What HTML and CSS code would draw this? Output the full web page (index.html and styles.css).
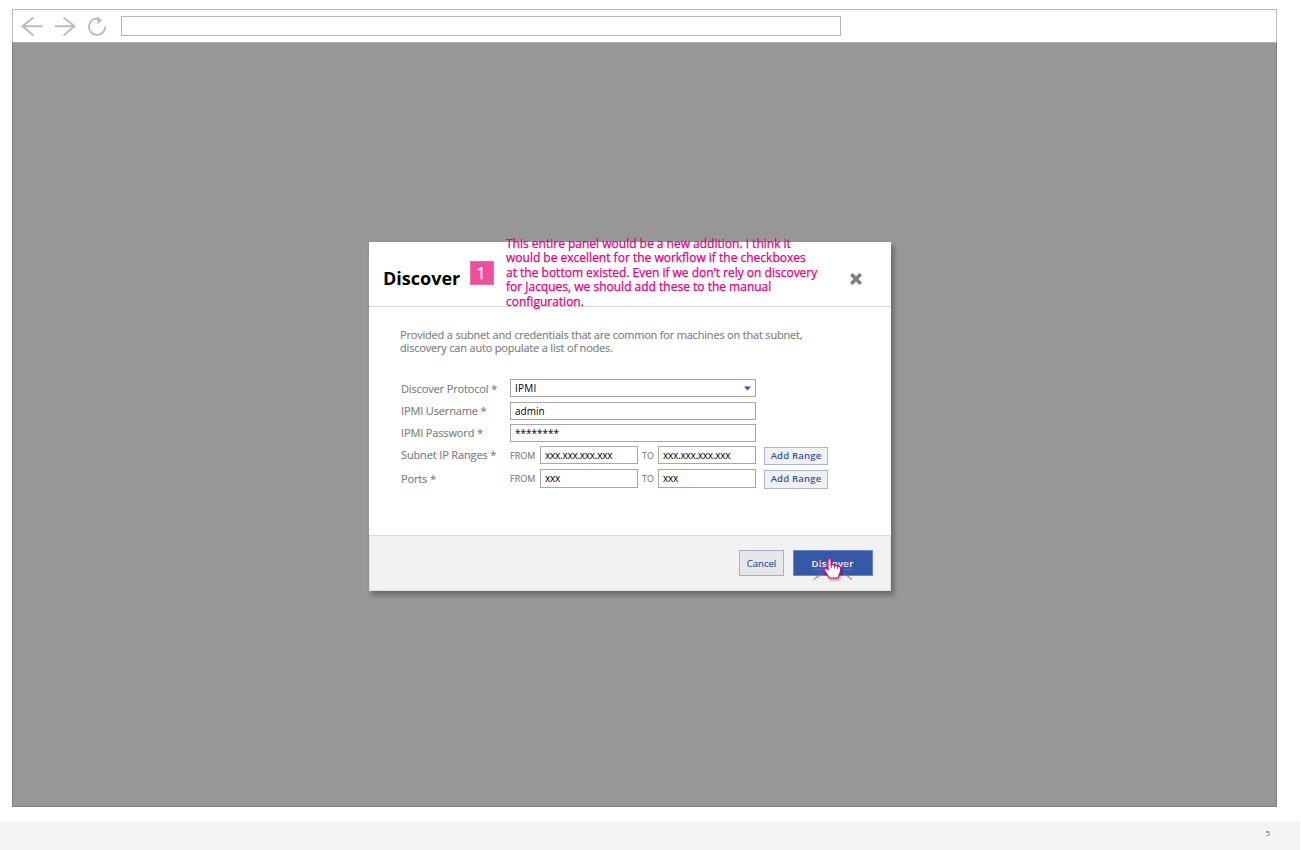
FILE: index.html
```html
<!DOCTYPE html>
<html lang="en">
<head>
<meta charset="utf-8">
<title>Discover</title>
<link rel="stylesheet" href="styles.css">
</head>
<body>
<main class="browser">
  <header class="toolbar">
    <svg class="nav" width="88" height="24" viewBox="0 0 88 24" fill="none" stroke="#bcbcbc" stroke-width="1.9">
      <path d="M21.500 12.300H1.500M12.500 3.500L1.500 12.300L12.500 21.500"/>
      <path d="M34 12.300H53.500M42.500 3.500L53.500 12.300L42.500 21.500"/>
      <path d="M77.500 4.700A8.200 8.200 0 1 0 84.300 12.500" stroke-width="2"/>
      <path d="M76.300 2.500L81 6.300L76.300 10.500Z" fill="#bcbcbc" stroke="none"/>
    </svg>
    <div class="address"></div>
  </header>
  <div class="viewport">
    <section class="modal">
      <header class="modal-head">
        <h1 class="title">Discover</h1>
        <span class="marker">1</span>
        <p class="note">This entire panel would be a new addition. I think it<br>would be excellent for the workflow if the checkboxes<br>at the bottom existed. Even if we don’t rely on discovery<br>for Jacques, we should add these to the manual<br>configuration.</p>
        <svg class="close" width="12" height="12" viewBox="0 0 12 12" stroke="#808080" stroke-width="3.700" stroke-linecap="butt"><path d="M1.300 1.300L10.700 10.700M10.700 1.300L1.300 10.700"/></svg>
      </header>
      <div class="modal-body">
        <p class="intro">Provided a subnet and credentials that are common for machines on that subnet,<br>discovery can auto populate a list of nodes.</p>
        <div class="form">
          <div class="row"><span class="label">Discover Protocol *</span><div class="field wide select">IPMI<svg width="7" height="5" viewBox="0 0 7 5"><path d="M0 .5H7L3.500 4.500Z" fill="#3459a9"/></svg></div></div>
          <div class="row"><span class="label tight">IPMI Username *</span><div class="field wide">admin</div></div>
          <div class="row"><span class="label tight">IPMI Password *</span><div class="field wide">********</div></div>
          <div class="row"><span class="label tight">Subnet IP Ranges *</span><span class="from">FROM</span><div class="field ip">xxx.xxx.xxx.xxx</div><span class="to">TO</span><div class="field ip">xxx.xxx.xxx.xxx</div><div class="add">Add Range</div></div>
          <div class="row ports"><span class="label">Ports *</span><span class="from">FROM</span><div class="field ip">xxx</div><span class="to">TO</span><div class="field ip">xxx</div><div class="add">Add Range</div></div>
        </div>
      </div>
      <footer class="modal-foot">
        <div class="cancel">Cancel</div>
        <div class="submit">Discover
          <svg class="pointer" width="42" height="28" viewBox="0 0 42 28">
            <g stroke="#d8308b" stroke-width="1" fill="none"><path d="M3 5L12 11M2 14.500H12M3 24.500L12 17.500M41 5L32 11M42 14.500H32M41 24.500L32 17.500"/></g>
            <path class="hand" d="M17 4.500Q18.500 2.500 20 4.500V10Q22 8.800 23.500 10.500Q25.500 9.500 26.500 11.500Q29 10.500 29.500 13V16.500L27 23H18.500L13.500 15.500Q12.500 13 14.500 12.800L17 14.500Z" fill="#fff" stroke="#e5007d" stroke-width="1.200"/>
            <path d="M20.500 10V13M23.500 10.500V13.500M26.500 11.500V14" stroke="#e5007d" stroke-width=".8"/>
          </svg>
        </div>
      </footer>
    </section>
  </div>
</main>
<footer class="page-foot">5</footer>
</body>
</html>
```
FILE: styles.css
```css
* { box-sizing: border-box; }
body {
  margin: 0;
  height: 850px;
  display: flex;
  flex-direction: column;
  overflow: hidden;
  background: #fff;
  font-family: "Open Sans", sans-serif;
}
h1, p { margin: 0; }
.browser {
  width: 1265px;
  height: 798px;
  margin: 9px 0 14px 12px;
  display: flex;
  flex-direction: column;
  flex-shrink: 0;
}
.toolbar {
  height: 33px;
  display: flex;
  align-items: flex-start;
  padding: 6px 0 0 8px;
  border: 1px solid #bcbcbc;
  border-bottom: 0;
}
.nav { flex: none; margin-top: -2px; }
.address {
  width: 720px;
  height: 20px;
  margin-left: 12px;
  border: 1px solid #b5b5b5;
}
.viewport {
  flex: 1;
  background: #979797;
  border: 1px solid #808080;
  border-top-color: #b0b0b0;
  padding: 199px 0 0 356px;
}
.modal {
  width: 522px;
  height: 349px;
  display: flex;
  flex-direction: column;
  background: #fff;
  box-shadow: 3px 4px 5px rgba(0, 0, 0, .3);
}
.modal-head {
  height: 65px;
  display: flex;
  align-items: flex-start;
  padding-left: 14px;
  border-bottom: 1px solid #d8d8d8;
}
.title {
  width: 87px;
  padding-top: 24px;
  font-size: 18px;
  line-height: 25px;
  font-weight: 700;
  color: #000;
}
.marker {
  width: 24px;
  height: 24px;
  margin-top: 19px;
  border: 1px solid #f06aae;
  background: #ee4f9c;
  color: #fff;
  font-size: 16px;
  line-height: 22px;
  text-align: center;
  padding-right: 2px;
  -webkit-text-stroke: .25px #fff;
}
.note {
  width: 320px;
  margin: -5px 0 0 12px;
  color: #e5007d;
  font-size: 12px;
  line-height: 14.45px;
  white-space: nowrap;
  -webkit-text-stroke: .25px #e5007d;
}
.close { margin: 31px 0 0 24px; }
.modal-body { height: 228px; padding: 21px 0 0 31px; }
.intro {
  color: #808080;
  font-size: 11px;
  line-height: 13px;
  letter-spacing: -.19px;
  white-space: nowrap;
  -webkit-text-stroke: .15px #808080;
}
.form {
  padding: 25px 0 0 1px;
  display: grid;
  grid-template-rows: 23px 22px 22px 23px 20px;
}
.row { display: flex; align-items: flex-start; }
.label {
  width: 109px;
  font-size: 11px;
  line-height: 20px;
  letter-spacing: -.14px;
  color: #808080;
  -webkit-text-stroke: .15px #808080;
}
.tight { line-height: 18px; }
.field {
  height: 18px;
  padding-left: 4px;
  border: 1px solid #a8a8a8;
  font-size: 10px;
  line-height: 16px;
  color: #000;
  white-space: nowrap;
}
.wide { width: 246px; }
.ip { width: 98px; letter-spacing: -.23px; }
.ports .field, .ports .add { height: 19px; }
.select {
  display: flex;
  align-items: center;
  justify-content: space-between;
  padding-right: 4px;
  letter-spacing: .25px;
}
.from, .to {
  width: 30px;
  font-size: 9px;
  line-height: 20px;
  color: #808080;
  -webkit-text-stroke: .15px #808080;
}
.to { width: 20px; padding-left: 4px; }
.add {
  width: 64px;
  height: 18px;
  margin: 1px 0 0 8px;
  border: 1px solid #aab3dc;
  background: #f1f1f1;
  color: #3459a9;
  font-size: 9.5px;
  letter-spacing: .2px;
  font-weight: 600;
  line-height: 16px;
  text-align: center;
  white-space: nowrap;
}
.modal-foot {
  height: 56px;
  display: flex;
  align-items: flex-start;
  justify-content: flex-end;
  gap: 9px;
  padding: 14px 17px 0 0;
  background: #f1f1f1;
  border: 1px solid #dcdcdc;
}
.cancel, .submit {
  height: 26px;
  border: 1px solid #a5aedb;
  font-size: 9.5px;
  line-height: 25px;
  text-align: center;
}
.cancel {
  width: 45px;
  background: #e7e7e7;
  color: #3459a9;
  -webkit-text-stroke: .2px #3459a9;
}
.submit {
  position: relative;
  width: 80px;
  background: #3459a9;
  border-color: #7185c2;
  color: #fff;
  font-weight: 600;
  letter-spacing: .35px;
  padding-right: 1px;
}
.pointer { position: absolute; left: 17px; top: 4px; }
.hand { filter: drop-shadow(1px 2px 1px rgba(0, 0, 0, .3)); }
.page-foot {
  width: 1300px;
  height: 29px;
  flex-shrink: 0;
  padding-right: 30px;
  background: #f5f5f5;
  color: #666;
  font-size: 8px;
  line-height: 24px;
  text-align: right;
}
```
